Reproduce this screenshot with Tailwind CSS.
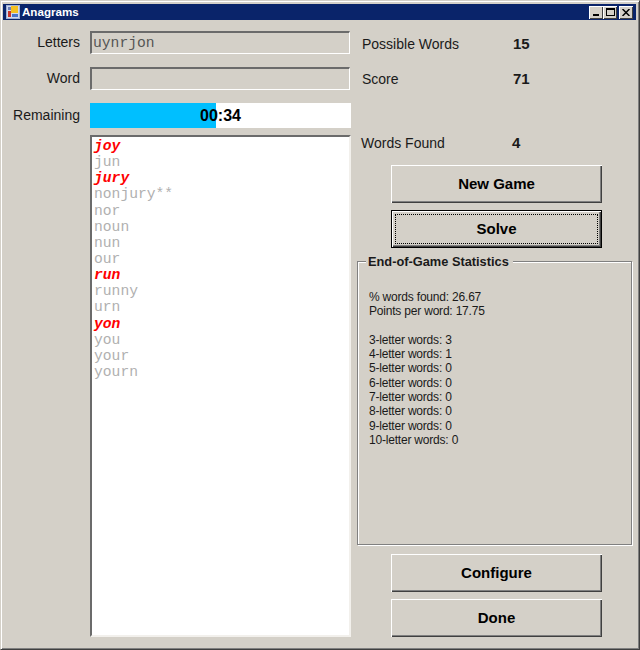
<!DOCTYPE html>
<html lang="en">
<head>
    <meta charset="UTF-8">
    <title>Anagrams</title>
    <script src="https://cdn.jsdelivr.net/npm/@tailwindcss/browser@4"></script>
</head>
<body class="bg-[#d4d0c8] font-['Liberation_Sans',sans-serif]">
    <div class="w-[640px] h-[650px] overflow-hidden flex flex-col border border-[#404040] border-t-[#d4d0c8] border-l-[#d4d0c8] shadow-[inset_1px_1px_0_#fff,inset_-1px_-1px_0_#808080] pt-[3px] pl-[2px] pr-[3px]">
        <!-- title bar -->
        <div class="h-[16px] shrink-0 bg-[#0a246a] flex items-center pl-[3px] pr-[3px]">
            <svg class="w-[14px] h-[14px] shrink-0" viewBox="0 0 14 14">
                <rect x="0.5" y="0.5" width="13" height="13" fill="#cfd8ee" stroke="#9fb0d4"/>
                <rect x="2" y="2" width="3" height="3" fill="#6c7fb8"/>
                <rect x="5" y="1" width="7" height="7" fill="#f4c020"/>
                <rect x="2" y="6" width="3" height="6" fill="#c8352a"/>
                <rect x="6" y="9" width="6" height="3" fill="#4a74c8"/>
            </svg>
            <span class="ml-[2px] text-[11.6px] font-bold text-white leading-none">Anagrams</span>
            <div class="ml-auto flex">
                <div class="w-[14px] h-[13px] bg-[#d4d0c8] shadow-[inset_1px_1px_0_#fff,inset_-1px_-1px_0_#404040] flex items-end pl-[4px] pb-[3px]">
                    <div class="w-[6px] h-[2px] bg-black"></div>
                </div>
                <div class="w-[14px] h-[13px] bg-[#d4d0c8] shadow-[inset_1px_1px_0_#fff,inset_-1px_-1px_0_#404040] flex items-center justify-center">
                    <div class="w-[9px] h-[8px] border border-black border-t-2"></div>
                </div>
                <div class="ml-[2px] w-[14px] h-[13px] bg-[#d4d0c8] shadow-[inset_1px_1px_0_#fff,inset_-1px_-1px_0_#404040] flex items-center justify-center">
                    <svg class="w-[8px] h-[7px]" viewBox="0 0 8 7"><path d="M0.5 0 L7.5 7 M7.5 0 L0.5 7" stroke="#000" stroke-width="1.5"/></svg>
                </div>
            </div>
        </div>

        <div class="flex-1 flex min-h-0">
            <!-- left side -->
            <div class="w-[351px] shrink-0 flex flex-col pt-[11px]">
                <div class="flex items-center h-[23px]">
                    <span class="w-[77px] text-right text-[14px] text-[#1a1a1a]">Letters</span>
                    <div class="ml-[10px] w-[260px] h-[23px] border border-[#fff] border-t-[#6b6b6b] border-l-[#6b6b6b] border-t-2 border-l-2 flex items-center pl-[1px] font-['Liberation_Mono',monospace] text-[14.67px] text-[#555]">uynrjon</div>
                </div>
                <div class="flex items-center h-[23px] mt-[13px]">
                    <span class="w-[77px] text-right text-[14px] text-[#1a1a1a]">Word</span>
                    <div class="ml-[10px] w-[260px] h-[23px] border border-[#fff] border-t-[#6b6b6b] border-l-[#6b6b6b] border-t-2 border-l-2"></div>
                </div>
                <div class="flex items-center h-[25px] mt-[13px]">
                    <span class="w-[77px] text-right text-[14px] text-[#1a1a1a]">Remaining</span>
                    <div class="relative ml-[10px] w-[261px] h-[25px] bg-white flex items-center justify-center">
                        <div class="absolute left-0 top-0 h-full w-[126px] bg-[#00bfff]"></div>
                        <span class="relative text-[16px] font-bold text-black">00:34</span>
                    </div>
                </div>
                <div class="ml-[87px] mt-[7px] w-[261px] h-[502px] bg-white border-2 border-[#f2f0ec] border-t-[#6b6b6b] border-l-[#6b6b6b] pl-[2px] pt-[1px] font-['Liberation_Mono',monospace] text-[14.67px] leading-[16.14px] text-[#b0b0b0]">
                    <div class="font-bold italic text-[#ff0000]">joy</div>
                    <div>jun</div>
                    <div class="font-bold italic text-[#ff0000]">jury</div>
                    <div>nonjury**</div>
                    <div>nor</div>
                    <div>noun</div>
                    <div>nun</div>
                    <div>our</div>
                    <div class="font-bold italic text-[#ff0000]">run</div>
                    <div>runny</div>
                    <div>urn</div>
                    <div class="font-bold italic text-[#ff0000]">yon</div>
                    <div>you</div>
                    <div>your</div>
                    <div>yourn</div>
                </div>
            </div>

            <!-- right side -->
            <div class="flex-1 flex flex-col pl-[4px] text-[14px] text-[#1a1a1a]">
                <div class="flex items-center h-[16px] mt-[16px] pl-[4px]">
                    <span class="w-[151px]">Possible Words</span><span class="font-bold text-[15px]">15</span>
                </div>
                <div class="flex items-center h-[16px] mt-[19px] pl-[4px]">
                    <span class="w-[151px]">Score</span><span class="font-bold text-[15px]">71</span>
                </div>
                <div class="flex items-center h-[16px] mt-[48px] pl-[3px]">
                    <span class="w-[151px]">Words Found</span><span class="font-bold text-[15px]">4</span>
                </div>
                <button class="ml-[33px] mt-[14px] w-[211px] h-[38px] shrink-0 bg-[#d4d0c8] shadow-[inset_1px_1px_0_#fff,inset_-1px_-1px_0_#404040,inset_-2px_-2px_0_#808080] text-[15px] font-bold text-black">New Game</button>
                <button class="ml-[33px] mt-[7px] w-[211px] h-[38px] shrink-0 bg-[#d4d0c8] border border-black shadow-[inset_1px_1px_0_#fff,inset_-1px_-1px_0_#404040,inset_-2px_-2px_0_#808080] p-[3px] text-[15px] font-bold text-black">
                    <span class="flex items-center justify-center w-full h-full border border-dotted border-black">Solve</span>
                </button>
                <div class="relative -ml-[1px] mt-[13px] w-[275px] h-[284px] shrink-0 border border-[#808080] shadow-[1px_1px_0_#fff,inset_1px_1px_0_#fff] pl-[11px] pt-[28px] text-[12px] leading-[14.3px] tracking-[-0.2px]">
                    <span class="absolute left-[8px] top-[-7px] bg-[#d4d0c8] pl-[2px] pr-[4px] text-[12.8px] leading-[14px] tracking-normal font-bold">End-of-Game Statistics</span>
                    <div>% words found: 26.67</div>
                    <div>Points per word: 17.75</div>
                    <div class="h-[14.3px]"></div>
                    <div>3-letter words: 3</div>
                    <div>4-letter words: 1</div>
                    <div>5-letter words: 0</div>
                    <div>6-letter words: 0</div>
                    <div>7-letter words: 0</div>
                    <div>8-letter words: 0</div>
                    <div>9-letter words: 0</div>
                    <div>10-letter words: 0</div>
                </div>
                <button class="ml-[33px] mt-[9px] w-[211px] h-[38px] shrink-0 bg-[#d4d0c8] shadow-[inset_1px_1px_0_#fff,inset_-1px_-1px_0_#404040,inset_-2px_-2px_0_#808080] text-[15px] font-bold text-black">Configure</button>
                <button class="ml-[33px] mt-[7px] w-[211px] h-[38px] shrink-0 bg-[#d4d0c8] shadow-[inset_1px_1px_0_#fff,inset_-1px_-1px_0_#404040,inset_-2px_-2px_0_#808080] text-[15px] font-bold text-black">Done</button>
            </div>
        </div>
    </div>
</body>
</html>
